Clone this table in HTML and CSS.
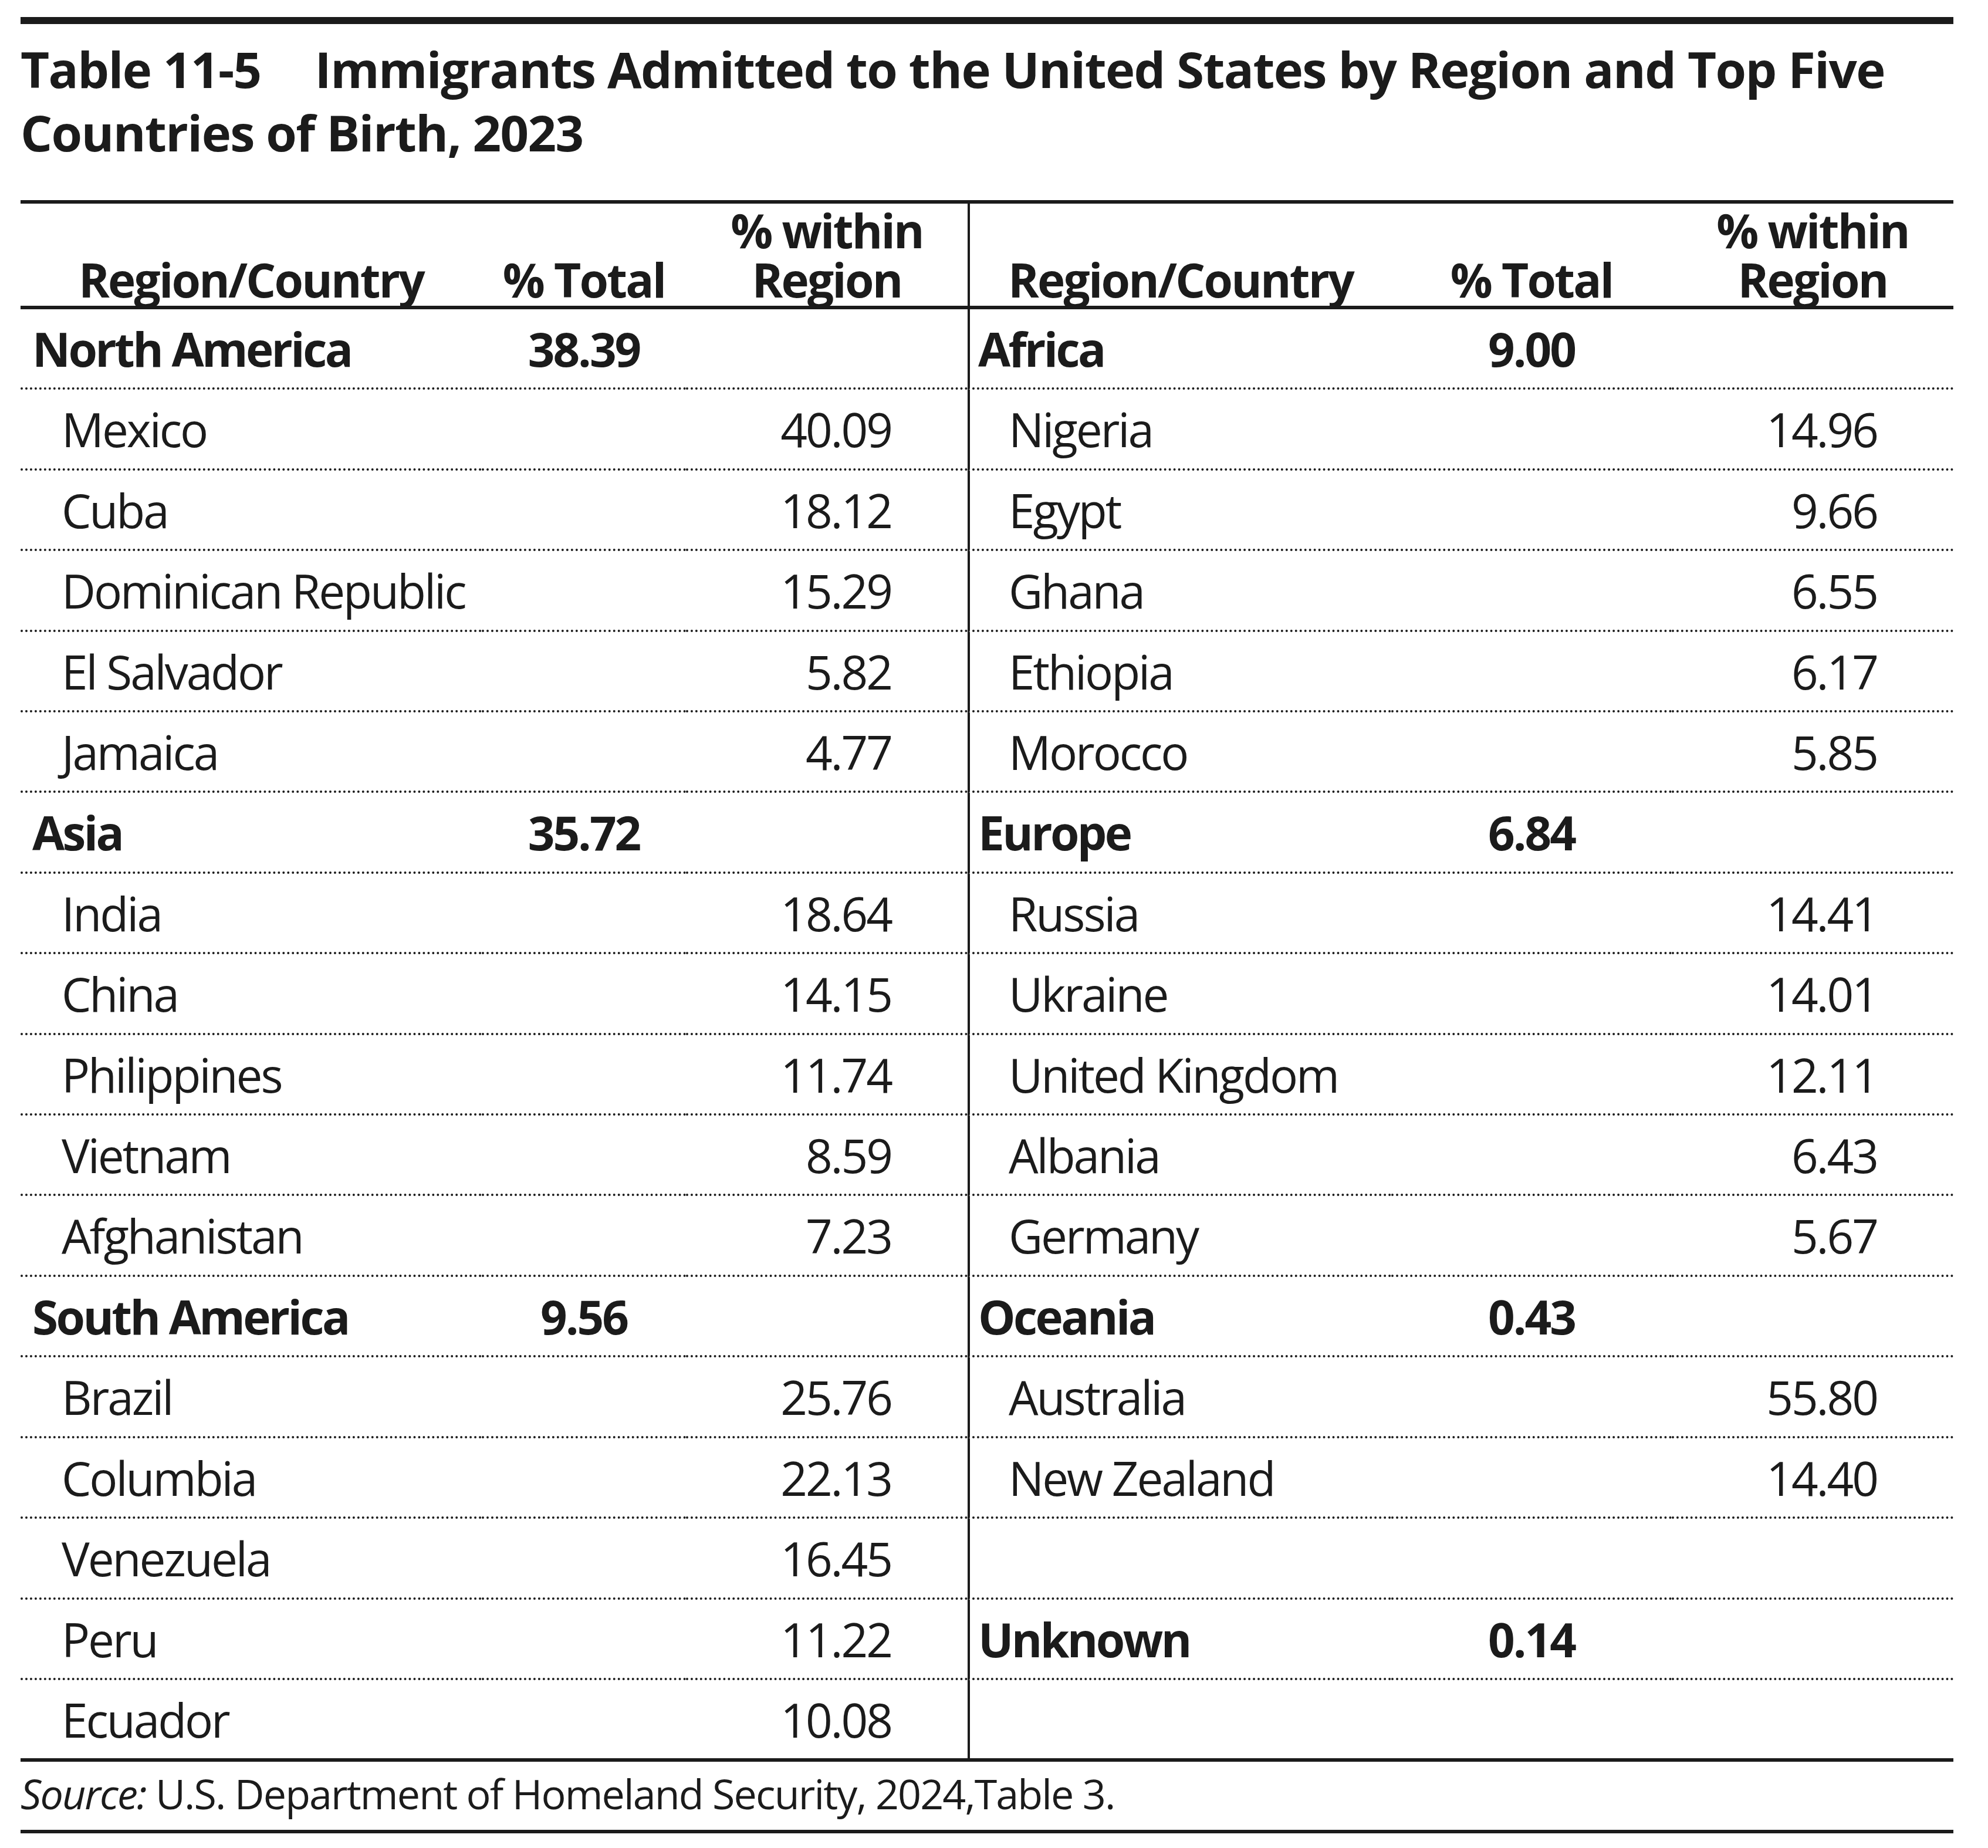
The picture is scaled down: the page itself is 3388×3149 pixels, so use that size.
FILE: index.html
```html
<!DOCTYPE html>
<html lang="en">
<head>
<meta charset="utf-8">
<title>Table 11-5 Immigrants Admitted to the United States</title>
<link rel="stylesheet" href="styles.css">
</head>
<body>
<div class="page">
  <h1 class="title"><span class="title-num">Table 11-5</span>Immigrants Admitted to the United States by Region and Top Five<br>Countries of Birth, 2023</h1>
  <table class="data">
    <colgroup>
      <col class="w-name-l"><col class="w-total-l"><col class="w-within-l">
      <col class="w-name-r"><col class="w-total-r"><col class="w-within-r">
    </colgroup>
    <thead>
      <tr>
        <th>Region/Country</th><th>% Total</th><th><span class="hl">% within</span><span class="hl">Region</span></th>
        <th class="divide">Region/Country</th><th>% Total</th><th><span class="hl">% within</span><span class="hl">Region</span></th>
      </tr>
    </thead>
    <tbody>
      <tr><td class="reg">North America</td><td class="total">38.39</td><td class="within"></td><td class="reg divide">Africa</td><td class="total">9.00</td><td class="within"></td></tr>
      <tr><td class="cty">Mexico</td><td class="total"></td><td class="within">40.09</td><td class="cty divide">Nigeria</td><td class="total"></td><td class="within">14.96</td></tr>
      <tr><td class="cty">Cuba</td><td class="total"></td><td class="within">18.12</td><td class="cty divide">Egypt</td><td class="total"></td><td class="within">9.66</td></tr>
      <tr><td class="cty">Dominican Republic</td><td class="total"></td><td class="within">15.29</td><td class="cty divide">Ghana</td><td class="total"></td><td class="within">6.55</td></tr>
      <tr><td class="cty">El Salvador</td><td class="total"></td><td class="within">5.82</td><td class="cty divide">Ethiopia</td><td class="total"></td><td class="within">6.17</td></tr>
      <tr><td class="cty">Jamaica</td><td class="total"></td><td class="within">4.77</td><td class="cty divide">Morocco</td><td class="total"></td><td class="within">5.85</td></tr>
      <tr><td class="reg">Asia</td><td class="total">35.72</td><td class="within"></td><td class="reg divide">Europe</td><td class="total">6.84</td><td class="within"></td></tr>
      <tr><td class="cty">India</td><td class="total"></td><td class="within">18.64</td><td class="cty divide">Russia</td><td class="total"></td><td class="within">14.41</td></tr>
      <tr><td class="cty">China</td><td class="total"></td><td class="within">14.15</td><td class="cty divide">Ukraine</td><td class="total"></td><td class="within">14.01</td></tr>
      <tr><td class="cty">Philippines</td><td class="total"></td><td class="within">11.74</td><td class="cty divide">United Kingdom</td><td class="total"></td><td class="within">12.11</td></tr>
      <tr><td class="cty">Vietnam</td><td class="total"></td><td class="within">8.59</td><td class="cty divide">Albania</td><td class="total"></td><td class="within">6.43</td></tr>
      <tr><td class="cty">Afghanistan</td><td class="total"></td><td class="within">7.23</td><td class="cty divide">Germany</td><td class="total"></td><td class="within">5.67</td></tr>
      <tr><td class="reg">South America</td><td class="total">9.56</td><td class="within"></td><td class="reg divide">Oceania</td><td class="total">0.43</td><td class="within"></td></tr>
      <tr><td class="cty">Brazil</td><td class="total"></td><td class="within">25.76</td><td class="cty divide">Australia</td><td class="total"></td><td class="within">55.80</td></tr>
      <tr><td class="cty">Columbia</td><td class="total"></td><td class="within">22.13</td><td class="cty divide">New Zealand</td><td class="total"></td><td class="within">14.40</td></tr>
      <tr><td class="cty">Venezuela</td><td class="total"></td><td class="within">16.45</td><td class="cty divide"></td><td class="total"></td><td class="within"></td></tr>
      <tr><td class="cty">Peru</td><td class="total"></td><td class="within">11.22</td><td class="reg divide">Unknown</td><td class="total">0.14</td><td class="within"></td></tr>
      <tr><td class="cty">Ecuador</td><td class="total"></td><td class="within">10.08</td><td class="cty divide"></td><td class="total"></td><td class="within"></td></tr>
    </tbody>
  </table>
  <p class="source"><em>Source:</em> U.S. Department of Homeland Security, 2024,Table 3.</p>
</div>
</body>
</html>
```

FILE: styles.css
```css
* { box-sizing: border-box; }

body {
  margin: 0;
  background: #ffffff;
  color: #1b1b1b;
  font-family: "Open Sans", "Noto Sans", sans-serif;
}

.page {
  width: 3294px;
  margin-left: 35px;
  padding-top: 29px;
}

.title {
  margin: 0;
  padding-top: 22px;
  border-top: 12px solid #1b1b1b;
  font-size: 85px;
  line-height: 108px;
  font-weight: 700;
  letter-spacing: -0.019em;
  white-space: nowrap;
}

.title-num {
  margin-right: 92px;
}

.data {
  margin-top: 62px;
  width: 3294px;
  table-layout: fixed;
  border-collapse: separate;
  border-spacing: 0;
  border-top: 6px solid #1b1b1b;
  border-bottom: 6px solid #1b1b1b;
}

.w-name-l { width: 786px; }
.w-total-l { width: 348px; }
.w-within-l { width: 480px; }
.w-name-r { width: 722px; }
.w-total-r { width: 478px; }
.w-within-r { width: 480px; }

.data th {
  font-size: 80px;
  line-height: 84px;
  font-weight: 700;
  letter-spacing: -0.035em;
  text-align: center;
  vertical-align: bottom;
  padding: 3px 0;
  border-bottom: 6px solid #1b1b1b;
  white-space: nowrap;
}

.data th .hl {
  display: block;
}

.data td {
  font-size: 80px;
  line-height: 133.4px;
  letter-spacing: -0.038em;
  padding: 0;
  border-bottom: 4px dotted #1b1b1b;
  white-space: nowrap;
}

.data tbody tr:last-child td {
  border-bottom: 0;
}

.data .divide {
  border-left: 4px solid #1b1b1b;
}

.data .reg {
  font-weight: 700;
  letter-spacing: -0.045em;
  padding-left: 20px;
}

.data .cty {
  padding-left: 70px;
}

.data .reg.divide {
  padding-left: 14px;
}

.data .cty.divide {
  padding-left: 66px;
}

.data .total {
  text-align: center;
  font-weight: 700;
}

.data .within {
  text-align: right;
  padding-right: 130px;
}

.source {
  margin: 4px 0 0;
  padding-bottom: 12px;
  border-bottom: 6px solid #1b1b1b;
  font-size: 70px;
  line-height: 100px;
  letter-spacing: -0.027em;
  white-space: nowrap;
}

.source em {
  font-style: italic;
}
```
